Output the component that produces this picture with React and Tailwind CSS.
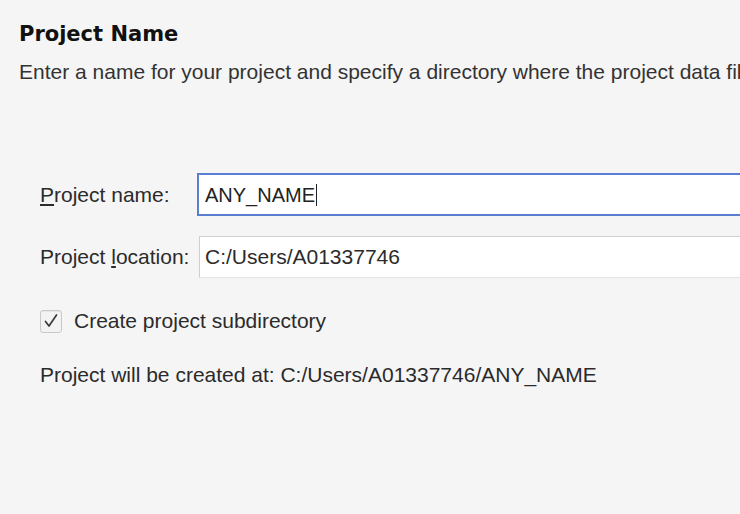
const font = { fontFamily: '"Liberation Sans", Arial, sans-serif' };

function CheckBox() {
  return (
    <span className="w-[22px] h-[23px] shrink-0 rounded-[3px] border border-[#c9c9c9] bg-[#f3f3f3] flex items-center justify-center shadow-[inset_0_1px_1px_rgba(0,0,0,0.06)]">
      <svg width="16" height="16" viewBox="0 0 16 16" fill="none">
        <path d="M2.5 8.5 L6 13 L13.5 2" stroke="#3a3a3a" strokeWidth="1.7" strokeLinecap="round" strokeLinejoin="round" />
      </svg>
    </span>
  );
}

export default function App() {
  return (
    <div
      className="w-[740px] h-[514px] bg-[#f5f5f5] overflow-hidden text-[#2b2b2b]"
      style={font}
    >
      <div className="pl-[19px] pt-[22px]">
        <h1 className="text-[21px] leading-[24px] font-bold text-[#111] [font-family:'DejaVu_Sans',sans-serif]">
          Project Name
        </h1>
        <p className="mt-[14px] text-[21px] leading-[24px] whitespace-nowrap text-[#333]">
          Enter a name for your project and specify a directory where the project data files will be stored.
        </p>
      </div>

      <div className="pl-[40px] mt-[89px] flex flex-col">
        <div className="flex items-center">
          <label className="w-[157px] shrink-0 text-[21px] leading-[24px] whitespace-nowrap">
            <span className="underline underline-offset-2">P</span>roject name:
          </label>
          <div className="w-[600px] shrink-0 h-[43px] bg-white border-2 border-[#5a7fd0] flex items-center pl-[6px] text-[20px] text-[#222]">
            ANY_NAME
            <span className="w-px h-[22px] bg-[#222] ml-px" />
          </div>
        </div>

        <div className="flex items-center mt-[20px]">
          <label className="w-[159px] shrink-0 text-[21px] leading-[24px] whitespace-nowrap">
            Project <span className="underline underline-offset-2">l</span>ocation:
          </label>
          <div className="w-[600px] shrink-0 h-[42px] bg-white border border-[#cfcfcf] border-b-[#e4e4e4] flex items-center pl-[5px] text-[21px] text-[#2b2b2b]">
            C:/Users/A01337746
          </div>
        </div>

        <div className="flex items-center gap-[12px] mt-[31px]">
          <CheckBox />
          <span className="text-[21px] leading-[24px] whitespace-nowrap">Create project subdirectory</span>
        </div>

        <p className="mt-[30px] text-[21px] leading-[24px] whitespace-nowrap">
          Project will be created at: C:/Users/A01337746/ANY_NAME
        </p>
      </div>
    </div>
  );
}
